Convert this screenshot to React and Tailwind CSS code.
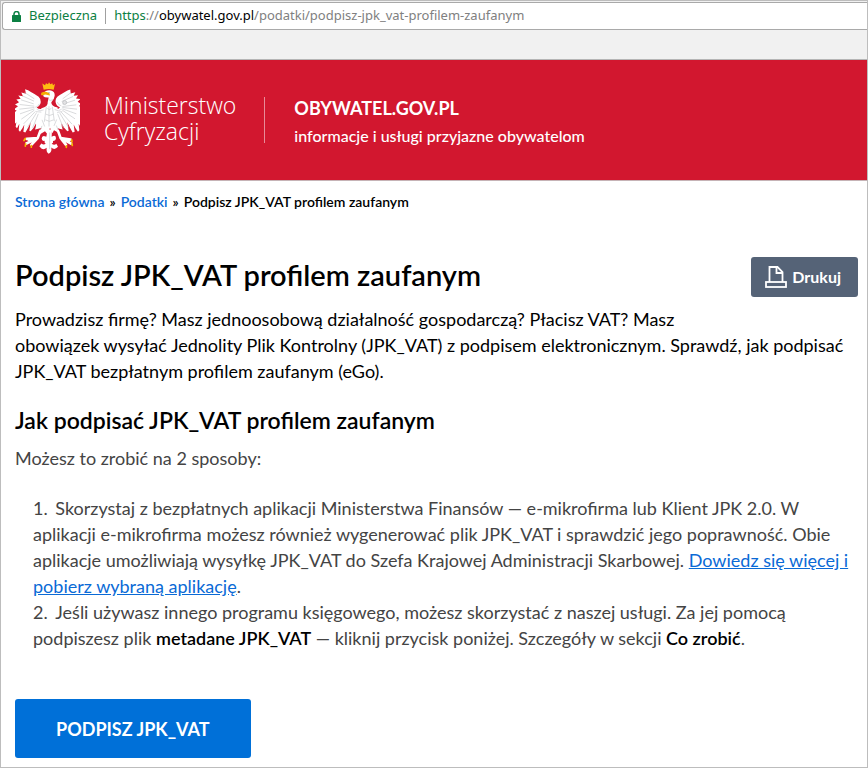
import React from 'react';

const LockIcon = () => (
  <svg className="h-[11px] w-[9px]" viewBox="0 0 9 11" aria-hidden="true">
    <path d="M2 5V3a2.5 2.5 0 0 1 5 0v2" fill="none" stroke="#0b8043" strokeWidth="1.5" />
    <rect y="4" width="9" height="7" rx="0.6" fill="#0b8043" />
  </svg>
);

const PrinterIcon = () => (
  <svg className="h-[22px] w-[22px]" viewBox="0 0 22 22" fill="none" stroke="#fff" strokeWidth="1.8" aria-hidden="true">
    <path d="M4.500 16V1h8l5 5v10" />
    <path d="M11.500 1v6h6" />
    <rect x="1" y="16" width="20" height="5" />
  </svg>
);

const EagleEmblem = () => (
  <svg className="h-[73px] w-[65px] shrink-0" viewBox="45 38 195 218" role="img" aria-label="Godło Polski">
    {/* Legs and talons */}
    <g fill="none" stroke="#fff" strokeLinecap="round" strokeWidth="8">
      <path d="M121 184l-8 22-27 5M113 206l-19 20M113 206l-34 16M112 206l-32 2" />
      <path d="M174 184l8 22 27 5M182 206l16 20M182 206l31 16M182 206l30 4" />
    </g>
    <g fill="none" stroke="#f5b800" strokeLinecap="round" strokeWidth="5">
      <path d="M76 207l-4 6M77 223l-1 7M94 228l0 5M215 211l1 6M216 223l1 5M199 229l0 5" />
    </g>
    {/* Tail */}
    <path fill="#fff" d="M143 180h13l-1 22q12-8 13 4-1 10-9 8 2 7-4 9 8 6 14 0l5 9q-8 9-16 5l-4-3q2 14-8 19-8-5-6-18-8 7-16 2l-6-7 6-8q7 6 13 1-5-3-3-9-9 2-9-7 1-12 14-5z" />
    {/* Wings */}
    <path fill="#fff" d="M75 59q9 2 19 9 12 6 22 14 7 7 6 17-1 9-12 15 9 9 24 1l15 12-5 31q-5 12-18 17-12 4-21 5 4-10 3-18-6 13-16 23l-4-1 4-26q-5 14-16 31l-6-2 3-22q-5 12-13 22l-4-5 2-19-7 13-4-4 2-14-5 6-1-13-3-1 5-15-7-2 12-10-9-3 13-10-9-5 12-7-8-8 13-2-7-10 14 2-5-11 14 4z" />
    <path fill="#fff" d="M211 60q-8 2-19 9-11 6-20 13-7 7-5 17 2 10 13 15-8 9-22 1l-14 12 4 31q6 12 20 17 11 4 20 5-4-10-3-18 6 13 17 23l4-1-4-26q6 14 16 31l6-2-3-22q5 12 13 22l4-5-2-19 7 12 3-4-1-13 5 5-1-13 3-1-5-15 6-2-12-10 8-3-12-10 8-5-12-7 8-8-13-2 6-10-13 2 5-11-14 4z" />
    {/* Body and head */}
    <path fill="#fff" d="M130 72q8-12 23-9 12 3 11 16-1 11-10 19-1 12 19 16l-2 46 5 30-14-8-5 9-7-16-7 20-8-10-15 9 6-29-2-49q21-5 19-18l3-14q-12 1-16-4z" />
    <g fill="none" stroke="#c6c7ca" strokeWidth="2">
      <path d="M74 69l29 19M67 79l35 16M63 91l38 12M59 105l44 5M58 119l45-5M60 133l43-15M64 149l39-27M71 163l35-37M83 173l27-44M98 175l17-42" />
      <path d="M212 70l-24 18M219 81l-34 15M225 92l-37 12M229 106l-42 5M231 119l-44-5M229 133l-42-15M225 148l-38-26M216 164l-33-37M205 173l-26-43M190 175l-17-42" />
      <path d="M146 91q7 4 12-1M139 112l-6 45M147 110l0 61M157 112l6 43M126 151l8 20M170 150l-8 19M126 169l-5 12M169 168l5 13M149 189v50" />
      <path d="M118 103q-4 10-12 10M184 109q-9-2-12-11M142 117q6 6 12 0M138 134q10 8 22 0M136 151q12 9 25 0" />
    </g>
    <path fill="none" stroke="#dddde0" strokeWidth="3" d="M110 119q9 9 21 2M185 119q-9 9-21 1M107 126l17 2M187 126l-16 3" />
    <circle cx="194" cy="99" r="6" fill="#e2e2e4" stroke="#b5b6ba" strokeWidth="2" />
    {/* Crown and beak */}
    <path fill="#fdbb12" d="M127 42l8 5 3-6 6 3 3-6 4 6 6-3 2 6 6-4-4 18q-15-5-30 0z" />
    <path fill="#f5ae00" d="M124 70q10-6 20-1 6 2 6 9-8-1-14-3l-10 3q-5-1-2-8z" />
    <circle cx="147" cy="70" r="1.500" fill="#555" />
  </svg>
);

const AddressBar = () => (
  <div className="border-b border-[#b5b5b5] bg-[#f1f1f1] pt-px pb-[29px] pl-px">
    <div className="flex h-7 items-center rounded-l-[3px] border border-r-0 border-[#a9a9a9] bg-white pl-[9px] font-['Noto_Sans',sans-serif] text-[13px] text-[#808080]">
      <LockIcon />
      <span className="ml-2 text-[#0b8043]">Bezpieczna</span>
      <span className="mx-2 h-4 w-px bg-[#a0a0a0]" />
      <span className="whitespace-nowrap">
        <span className="text-[#0b8043]">https</span>://<span className="text-black">obywatel.gov.pl</span>/podatki/podpisz-jpk_vat-profilem-zaufanym
      </span>
    </div>
  </div>
);

const Header = () => (
  <header className="flex h-[121px] items-center border-b border-[#c6b3b6] bg-[#d2172f] pl-[14px] text-white">
    <div className="mb-1 flex items-center">
      <EagleEmblem />
      <p className="ml-6 font-['Open_Sans',sans-serif] text-[23px] leading-[26px] font-light">
        Ministerstwo<br />Cyfryzacji
      </p>
    </div>
    <div className="ml-7 h-[46px] w-px bg-[#e88b98]" />
    <div className="mt-1 ml-[29px]">
      <p className="text-lg leading-7 font-bold">OBYWATEL.GOV.PL</p>
      <p className="text-base leading-7 font-medium">informacje i usługi przyjazne obywatelom</p>
    </div>
  </header>
);

const Breadcrumbs = () => (
  <nav className="flex gap-[5px] text-sm leading-5 font-semibold" aria-label="Breadcrumb">
    <a href="#home" className="text-[#0a6ad6]">Strona główna</a>
    <span>»</span>
    <a href="#podatki" className="text-[#0a6ad6]">Podatki</a>
    <span>»</span>
    <span>Podpisz JPK_VAT profilem zaufanym</span>
  </nav>
);

const App = () => {
  return (
    <div className="min-h-screen border border-[#bdbdbd] bg-white font-[Lato,sans-serif] text-black">
      <AddressBar />
      <Header />

      <main className="pt-[11px] pr-[9px] pb-[9px] pl-[14px]">
        <Breadcrumbs />

        <div className="mt-[45px] flex items-start justify-between">
          <h1 className="text-[29px] leading-9 font-semibold">Podpisz JPK_VAT profilem zaufanym</h1>
          <button type="button" className="flex h-10 items-center gap-[5px] rounded-[3px] bg-[#556377] pr-[17px] pl-[14px] text-base font-bold text-white">
            <PrinterIcon />
            Drukuj
          </button>
        </div>

        <p className="mt-[9px] text-lg leading-[26px]">
          Prowadzisz firmę? Masz jednoosobową działalność gospodarczą? Płacisz VAT? Masz<br />
          obowiązek wysyłać Jednolity Plik Kontrolny (JPK_VAT) z podpisem elektronicznym. Sprawdź, jak podpisać JPK_VAT bezpłatnym profilem zaufanym (eGo).
        </p>

        <h2 className="mt-5 text-[23px] leading-8 font-semibold">Jak podpisać JPK_VAT profilem zaufanym</h2>
        <p className="mt-[9px] text-lg leading-[26px] text-[#444]">Możesz to zrobić na 2 sposoby:</p>

        <ol className="mt-6 list-inside list-decimal pl-[18px] text-lg leading-[26px] text-[#444]">
          <li className="before:inline-block before:w-[3px] before:content-['']">
            Skorzystaj z bezpłatnych aplikacji Ministerstwa Finansów — e-mikrofirma lub Klient JPK 2.0. W aplikacji e-mikrofirma możesz również wygenerować plik JPK_VAT i sprawdzić jego poprawność. Obie aplikacje umożliwiają wysyłkę JPK_VAT do Szefa Krajowej Administracji Skarbowej.{' '}
            <a href="#aplikacja" className="text-[#0a6ad6] underline">Dowiedz się więcej i pobierz wybraną aplikację</a>.
          </li>
          <li className="before:inline-block before:w-[3px] before:content-['']">
            Jeśli używasz innego programu księgowego, możesz skorzystać z naszej usługi. Za jej pomocą podpiszesz plik <strong className="font-semibold text-black">metadane JPK_VAT</strong> — kliknij przycisk poniżej. Szczegóły w sekcji <strong className="font-semibold text-black">Co zrobić</strong>.
          </li>
        </ol>

        <button type="button" className="mt-12 h-[59px] rounded-[3px] bg-[#0070d8] px-[41px] text-lg font-bold text-white">
          PODPISZ JPK_VAT
        </button>
      </main>
    </div>
  );
};

export default App;
